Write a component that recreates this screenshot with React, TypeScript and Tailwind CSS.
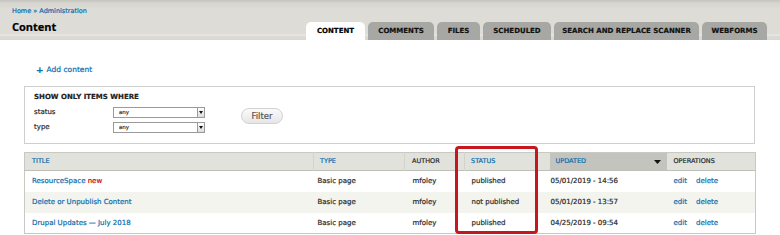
import React from "react";

const tabs: { label: string; w: string; active?: boolean }[] = [
  { label: "CONTENT", w: "w-[59px]", active: true },
  { label: "COMMENTS", w: "w-[66px]" },
  { label: "FILES", w: "w-[43px]" },
  { label: "SCHEDULED", w: "w-[68px]" },
  { label: "SEARCH AND REPLACE SCANNER", w: "w-[145px]" },
  { label: "WEBFORMS", w: "w-[65px]" },
];

const rows = [
  { title: "ResourceSpace", isNew: true, status: "published", updated: "05/01/2019 - 14:56" },
  { title: "Delete or Unpublish Content", isNew: false, status: "not published", updated: "05/01/2019 - 13:57" },
  { title: "Drupal Updates — July 2018", isNew: false, status: "published", updated: "04/25/2019 - 09:54" },
];

function Select() {
  return (
    <div className="flex h-[11px] w-[92px] border border-[#9a9a9a] bg-white">
      <span className="flex-1 pl-[5px] text-[5.5px] leading-[9px] text-[#333]">any</span>
      <span className="flex w-[7px] items-center justify-center border-l border-[#9a9a9a] bg-[linear-gradient(to_bottom,#ffffff,#dcdcdc)]">
        <svg width="4" height="3" viewBox="0 0 4 3">
          <path d="M0 0h4L2 3z" fill="#111" />
        </svg>
      </span>
    </div>
  );
}

export default function App() {
  return (
    <div className="relative h-[235px] w-[780px] overflow-hidden bg-white font-['DejaVu_Sans',sans-serif] text-[#2a2a2a] [-webkit-text-stroke:0.2px_currentcolor]">
      <header className="flex h-[40px] bg-[linear-gradient(to_bottom,#c4c3bd_0px,#d6d5cf_3px,#dddcd6_9px,#dddcd6_34px,#edece7_35px,#dcdbd5_36px,#d8d7d1_40px)]">
        <div className="pl-[12px] pt-[7px]">
          <div className="text-[6.5px] leading-[8px] text-[#0a6cae]">Home » Administration</div>
          <h1 className="mt-[5px] font-['Open_Sans',sans-serif] text-[11px] font-bold leading-[14px] text-black">
            Content
          </h1>
        </div>
        <nav className="ml-auto mr-[13px] mt-[22px] flex h-[18px] gap-[3px]">
          {tabs.map((t) => (
            <div
              key={t.label}
              className={`${t.w} flex items-center justify-center rounded-t-[5px] text-[7px] font-bold leading-none ${
                t.active ? "bg-white text-black" : "bg-[#a7a8a3] text-[#111]"
              }`}
            >
              {t.label}
            </div>
          ))}
        </nav>
      </header>

      <main className="ml-[24px] mr-[25px] pt-[25px]">
        <a className="ml-[12px] flex items-center gap-[3px] text-[7.5px] leading-[10px] text-[#0a6cae]">
          <span className="text-[9px] font-bold leading-[10px]">+</span>
          <span>Add content</span>
        </a>

        <fieldset className="mt-[11px] h-[58px] border border-[#cfcfcf] pl-[9px] pt-[6px]">
          <div className="text-[7px] font-bold leading-[8px] text-[#222]">SHOW ONLY ITEMS WHERE</div>
          <div className="mt-[6px] flex items-start">
            <div className="grid grid-cols-[79px_92px] gap-y-[4px]">
              <span className="text-[7px] leading-[11px]">status</span>
              <Select />
              <span className="text-[7px] leading-[11px]">type</span>
              <Select />
            </div>
            <button className="ml-[36px] mt-[1px] h-[16px] w-[42px] rounded-[8px] border border-[#d2d2d2] bg-[linear-gradient(to_bottom,#fafafa,#e6e6e6)] text-[8.5px] leading-none text-[#555]">
              Filter
            </button>
          </div>
        </fieldset>

        <table className="mt-[8px] w-[731px] table-fixed border-collapse border border-[#c8c9c3] text-[7px]">
          <colgroup>
            <col className="w-[289px]" />
            <col className="w-[91px]" />
            <col className="w-[60px]" />
            <col className="w-[85px]" />
            <col className="w-[117px]" />
            <col className="w-[89px]" />
          </colgroup>
          <thead>
            <tr className="h-[18px] border-b border-[#bebfb9] bg-[#e1e2dc] text-left text-[6.5px] uppercase">
              <th className="pl-[7px] font-normal text-[#0a6cae]">Title</th>
              <th className="border-l border-[#d2d3cd] pl-[6px] font-normal text-[#0a6cae]">Type</th>
              <th className="border-l border-[#d2d3cd] pl-[7px] font-normal text-[#2a2a2a]">Author</th>
              <th className="border-l border-[#d2d3cd] pl-[6px] font-normal text-[#0a6cae]">Status</th>
              <th className="bg-[#c3c4be] pl-[6px] pr-[6px] font-normal text-[#0a6cae]">
                <div className="flex items-center justify-between">
                  <span>Updated</span>
                  <svg width="7" height="4" viewBox="0 0 7 4">
                    <path d="M0 0h7L3.5 4z" fill="#111" />
                  </svg>
                </div>
              </th>
              <th className="pl-[7px] font-normal text-[#2a2a2a]">Operations</th>
            </tr>
          </thead>
          <tbody>
            {rows.map((r, i) => (
              <tr key={r.title} className={`h-[21px] ${i === 1 ? "bg-[#f3f4ee]" : "bg-white"}`}>
                <td className="pl-[7px] text-[#0a6cae]">
                  {r.title}
                  {r.isNew && <span className="text-[#cc0000]"> new</span>}
                </td>
                <td className="pl-[4px]">Basic page</td>
                <td className="pl-[8px]">mfoley</td>
                <td className="pl-[7px]">{r.status}</td>
                <td className="pl-[1px]">{r.updated}</td>
                <td className="pl-[7px] text-[#0a6cae]">
                  <span>edit</span>
                  <span className="ml-[9px]">delete</span>
                </td>
              </tr>
            ))}
          </tbody>
        </table>
      </main>

      <div className="absolute left-[455px] top-[146px] h-[88px] w-[83px] rounded-[4px] border-[3px] border-[#c8161e]" />
    </div>
  );
}
